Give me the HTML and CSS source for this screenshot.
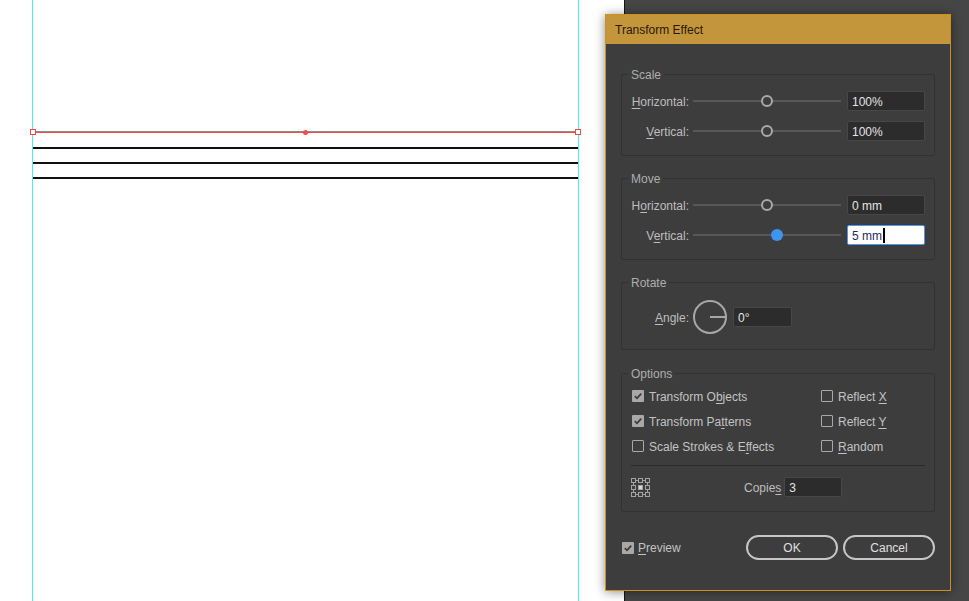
FILE: index.html
```html
<!DOCTYPE html>
<html lang="en">
<head>
<meta charset="utf-8">
<title>Transform Effect</title>
<link rel="stylesheet" href="styles.css">
</head>
<body>
<div class="workspace">
  <div class="artboard">
    <div class="guide guide-left"></div>
    <div class="guide guide-right"></div>
    <div class="path path-1"></div>
    <div class="path path-2"></div>
    <div class="path path-3"></div>
    <div class="path path-4"></div>
    <div class="handle handle-left"></div>
    <div class="handle handle-right"></div>
    <div class="center-dot"></div>
  </div>
  <div class="pasteboard"></div>

  <div class="dialog">
    <div class="titlebar">Transform Effect</div>
    <div class="dialog-body">

      <section class="group">
        <div class="legend">Scale</div>
        <div class="rows">
          <div class="row">
            <label class="label"><u>H</u>orizontal:</label>
            <div class="slider"><span class="thumb thumb-mid"></span></div>
            <div class="field">100%</div>
          </div>
          <div class="row">
            <label class="label"><u>V</u>ertical:</label>
            <div class="slider"><span class="thumb thumb-mid"></span></div>
            <div class="field">100%</div>
          </div>
        </div>
      </section>

      <section class="group group-move">
        <div class="legend">Move</div>
        <div class="rows">
          <div class="row">
            <label class="label">H<u>o</u>rizontal:</label>
            <div class="slider"><span class="thumb thumb-mid"></span></div>
            <div class="field">0 mm</div>
          </div>
          <div class="row">
            <label class="label">V<u>e</u>rtical:</label>
            <div class="slider"><span class="thumb thumb-active"></span></div>
            <div class="field field-focus">5 mm<span class="caret"></span></div>
          </div>
        </div>
      </section>

      <section class="group group-rotate">
        <div class="legend">Rotate</div>
        <div class="row row-angle">
          <label class="label"><u>A</u>ngle:</label>
          <div class="dial"></div>
          <div class="field field-angle">0°</div>
        </div>
      </section>

      <section class="group group-options">
        <div class="legend">Options</div>
        <div class="options-grid">
          <div class="opt"><span class="check checked"><svg viewBox="0 0 12 12" width="12" height="12"><path d="M2.8 6.2 L5 8.3 L9.2 3.6" fill="none" stroke="#3b3b3b" stroke-width="1.7"/></svg></span><span class="txt">Transform O<u>b</u>jects</span></div>
          <div class="opt"><span class="check"></span><span class="txt">Reflect <u>X</u></span></div>
          <div class="opt"><span class="check checked"><svg viewBox="0 0 12 12" width="12" height="12"><path d="M2.8 6.2 L5 8.3 L9.2 3.6" fill="none" stroke="#3b3b3b" stroke-width="1.7"/></svg></span><span class="txt">Transform Pa<u>t</u>terns</span></div>
          <div class="opt"><span class="check"></span><span class="txt">Reflect <u>Y</u></span></div>
          <div class="opt"><span class="check"></span><span class="txt">Scale Strokes &amp; E<u>f</u>fects</span></div>
          <div class="opt"><span class="check"></span><span class="txt"><u>R</u>andom</span></div>
        </div>
        <div class="separator"></div>
        <div class="copies-row">
          <svg class="ref-icon" viewBox="0 0 20 19" width="20" height="19">
            <g fill="none" stroke="#a3a3a3" stroke-width="1">
              <rect x="0.5" y="0.5" width="4" height="4"/>
              <rect x="7.5" y="0.5" width="4" height="4"/>
              <rect x="14.5" y="0.5" width="4" height="4"/>
              <rect x="0.5" y="7.5" width="4" height="4"/>
              <rect x="14.5" y="7.5" width="4" height="4"/>
              <rect x="0.5" y="14.5" width="4" height="4"/>
              <rect x="7.5" y="14.5" width="4" height="4"/>
              <rect x="14.5" y="14.5" width="4" height="4"/>
              <path d="M5 2.5 H7 M12 2.5 H14 M5 16.5 H7 M12 16.5 H14 M2.5 5 V7 M2.5 12 V14 M16.5 5 V7 M16.5 12 V14"/>
            </g>
            <rect x="7.5" y="7.5" width="4" height="4" fill="#d6d6d6" stroke="#a3a3a3" stroke-width="1"/>
          </svg>
          <label class="copies-label">Copie<u>s</u></label>
          <div class="field field-copies">3</div>
        </div>
      </section>

      <div class="footer">
        <div class="opt preview"><span class="check checked"><svg viewBox="0 0 12 12" width="12" height="12"><path d="M2.8 6.2 L5 8.3 L9.2 3.6" fill="none" stroke="#3b3b3b" stroke-width="1.7"/></svg></span><span class="txt"><u>P</u>review</span></div>
        <div class="buttons">
          <button class="btn">OK</button>
          <button class="btn">Cancel</button>
        </div>
      </div>

    </div>
  </div>
</div>
</body>
</html>
```

FILE: styles.css
```css
html, body {
  margin: 0;
  padding: 0;
}

body {
  width: 969px;
  height: 601px;
  overflow: hidden;
  font-family: "Liberation Sans", Arial, sans-serif;
  font-size: 12px;
}

.workspace {
  position: relative;
  display: flex;
  height: 601px;
}

.artboard {
  position: relative;
  width: 624px;
  flex-shrink: 0;
  background: #ffffff;
  border-right: 1px solid #151515;
}

.pasteboard {
  flex: 1;
  background: #464646;
}

.guide {
  position: absolute;
  top: 0;
  bottom: 0;
  width: 1px;
  background: #3ef2f6;
}

.guide-left { left: 32px; }
.guide-right { left: 578px; }

.path {
  position: absolute;
  left: 33px;
  width: 545px;
  height: 2px;
  background: #111111;
}

.path-1 {
  top: 131px;
  background: linear-gradient(#8c8c8c 50%, #f04c4c 50%);
}
.path-2 { top: 147px; }
.path-3 { top: 162px; }
.path-4 { top: 177px; }

.handle {
  position: absolute;
  top: 129px;
  width: 6px;
  height: 6px;
  box-sizing: border-box;
  border: 1px solid #f04a4a;
  background: #ffffff;
}

.handle-left { left: 30px; }
.handle-right { left: 575px; }

.center-dot {
  position: absolute;
  left: 303px;
  top: 130px;
  width: 5px;
  height: 5px;
  border-radius: 50%;
  background: #f24b4b;
}

/* Dialog */
.dialog {
  position: absolute;
  left: 605px;
  top: 14px;
  width: 346px;
  height: 577px;
  box-sizing: border-box;
  border: 1px solid #cc911c;
  background: #3d3d3d;
  box-shadow: 0 1px 10px rgba(0, 0, 0, 0.45);
  display: flex;
  flex-direction: column;
  color: #c3c3c3;
}

.titlebar {
  height: 29px;
  display: flex;
  align-items: center;
  padding-left: 9px;
  background: #c4963b;
  color: #2a170a;
  font-size: 12px;
}

.dialog-body {
  padding: 30px 15px 0;
  display: flex;
  flex-direction: column;
}

.group {
  border: 1px solid #323232;
  border-radius: 2px;
  padding: 0 9px 14px;
}

.group-move,
.group-rotate {
  margin-top: 22px;
}

.group-options {
  margin-top: 23px;
}

.legend {
  width: fit-content;
  height: 14px;
  line-height: 16px;
  margin: -8px 0 10px -3px;
  padding: 0 3px;
  background: #3d3d3d;
  color: #adadad;
}

.rows {
  display: flex;
  flex-direction: column;
  gap: 10px;
}

.row {
  display: flex;
  align-items: center;
  height: 20px;
}

.row-angle {
  height: 36px;
}

.label {
  width: 58px;
  height: 20px;
  line-height: 22px;
  flex-shrink: 0;
  text-align: right;
  white-space: nowrap;
  color: #bdbdbd;
}

u {
  text-underline-offset: 2px;
}

.slider {
  position: relative;
  width: 148px;
  height: 20px;
  margin-left: 4px;
  flex-shrink: 0;
}

.slider::before {
  content: "";
  position: absolute;
  left: 0;
  right: 0;
  top: 9px;
  height: 2px;
  background: #585858;
}

.thumb {
  position: absolute;
  top: 4px;
  width: 12px;
  height: 12px;
  box-sizing: border-box;
  border-radius: 50%;
}

.thumb-mid {
  left: 68px;
  border: 2px solid #a9a9a9;
  background: #3d3d3d;
}

.thumb-active {
  left: 78px;
  background: #3d95f0;
}

.field {
  width: 78px;
  height: 20px;
  margin-left: 6px;
  box-sizing: border-box;
  flex-shrink: 0;
  padding-left: 4px;
  padding-top: 1px;
  background: #2c2c2c;
  border: 1px solid #474747;
  border-radius: 2px;
  color: #e4e4e4;
  display: flex;
  align-items: center;
}

.field-focus {
  background: #ffffff;
  border-color: #4a98ec;
  color: #1f2a5c;
}

.caret {
  display: inline-block;
  width: 2px;
  height: 15px;
  margin-left: 1px;
  background: #000000;
}

.dial {
  position: relative;
  width: 34px;
  height: 34px;
  margin-left: 4px;
  box-sizing: border-box;
  flex-shrink: 0;
  border: 2px solid #a7a7a7;
  border-radius: 50%;
}

.dial::after {
  content: "";
  position: absolute;
  left: 15px;
  top: 14px;
  width: 15px;
  height: 2px;
  background: #a7a7a7;
}

.field-angle {
  width: 59px;
}

.options-grid {
  display: grid;
  grid-template-columns: 189px 1fr;
  row-gap: 5px;
  margin-top: -4px;
  margin-left: 1px;
}

.opt {
  display: flex;
  align-items: center;
  height: 20px;
  white-space: nowrap;
  color: #c3c3c3;
}

.txt {
  height: 20px;
  line-height: 22px;
}

.check {
  width: 12px;
  height: 12px;
  box-sizing: border-box;
  flex-shrink: 0;
  margin-right: 5px;
  border: 1px solid #a8a8a8;
  border-radius: 1px;
  display: flex;
}

.check.checked {
  border: none;
  background: #a8a8a8;
}

.separator {
  height: 1px;
  margin-top: 9px;
  background: #2b2b2b;
}

.copies-row {
  display: flex;
  align-items: center;
  height: 20px;
  margin-top: 11px;
}

.ref-icon {
  flex-shrink: 0;
}

.copies-label {
  height: 20px;
  line-height: 22px;
  margin-left: 93px;
  color: #bdbdbd;
}

.field-copies {
  width: 58px;
  margin-left: 3px;
}

.footer {
  display: flex;
  align-items: center;
  height: 25px;
  margin-top: 23px;
}

.preview {
  margin-left: 1px;
}

.preview .check {
  margin-right: 4px;
}

.preview .txt {
  line-height: 20px;
}

.buttons {
  margin-left: auto;
  display: flex;
  gap: 5px;
}

.btn {
  width: 92px;
  height: 25px;
  box-sizing: border-box;
  border: 2px solid #c6c6c6;
  border-radius: 13px;
  background: transparent;
  color: #e0e0e0;
  font-family: "Liberation Sans", Arial, sans-serif;
  font-size: 12px;
  padding: 0;
}
```
